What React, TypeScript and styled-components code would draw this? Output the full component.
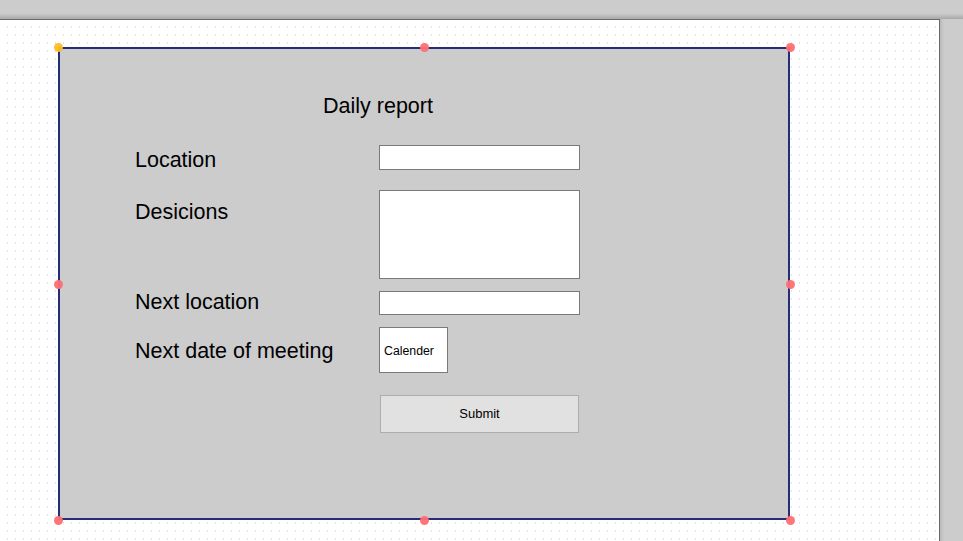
import React from "react";
import styled, { createGlobalStyle } from "styled-components";

const GlobalStyle = createGlobalStyle`
  html, body {
    margin: 0;
    padding: 0;
    background: #cccccc;
    font-family: "Liberation Sans", Arial, sans-serif;
  }
`;

const Page = styled.div`
  width: 963px;
  height: 541px;
  display: grid;
  grid-template-rows: 19px 1fr;
  background: #cccccc;
  overflow: hidden;
`;

const TopBar = styled.div`
  background: linear-gradient(#cccccc 0%, #cccccc 70%, #a9a9a9 100%);
`;

const Workspace = styled.div`
  display: flex;
`;

// dotted design grid: a 1x2 dot every 8px
const Canvas = styled.div`
  width: 940px;
  box-sizing: border-box;
  border-top: 1px solid #6a6a6a;
  border-right: 1px solid #6a6a6a;
  padding: 27px 0 0 58px;
  background-color: #ffffff;
  background-image: linear-gradient(90deg, transparent 1px, #ffffff 1px),
    linear-gradient(180deg, #e2e2e2 2px, #ffffff 2px);
  background-size: 8px 8px;
  background-position: 7px 6px;
`;

const SideGutter = styled.div`
  flex: 1;
  background: linear-gradient(90deg, #b8b8b8 0px, #cccccc 4px);
`;

const Panel = styled.div`
  position: relative;
  width: 732px;
  height: 473px;
  box-sizing: border-box;
  border: 2px solid #252c78;
  background: #cccccc;
  padding: 44px 0 0 75px;
  color: #000000;
`;

const Handle = styled.span<{ $x: number; $y: number; $primary?: boolean }>`
  position: absolute;
  left: ${(p) => p.$x - 2 - 4.5}px;
  top: ${(p) => p.$y - 2 - 4.5}px;
  width: 9px;
  height: 9px;
  border-radius: 50%;
  background: ${(p) => (p.$primary ? "#fbbf24" : "#ff6f73")};
  opacity: 0.95;
`;

const Title = styled.div`
  margin-left: 188px;
  padding-top: 1px;
  font-size: 21.5px;
  line-height: 25px;
  height: 25px;
`;

const Row = styled.div<{ $mt: number; $h: number }>`
  display: grid;
  grid-template-columns: 244px 201px;
  grid-template-rows: ${(p) => p.$h}px;
  align-items: start;
  margin-top: ${(p) => p.$mt}px;
`;

const Label = styled.label<{ $dy: number }>`
  margin-top: ${(p) => p.$dy}px;
  font-size: 21.5px;
  line-height: 25px;
  height: 25px;
  white-space: nowrap;
`;

const TextInput = styled.input`
  display: block;
  width: 201px;
  height: 100%;
  box-sizing: border-box;
  margin: 0;
  padding: 0 4px;
  border: 1px solid #7a7a7a;
  background: #ffffff;
  outline: none;
`;

const TextArea = styled.textarea`
  display: block;
  width: 201px;
  height: 100%;
  box-sizing: border-box;
  margin: 0;
  padding: 4px;
  border: 1px solid #7a7a7a;
  background: #ffffff;
  resize: none;
  outline: none;
`;

const CalendarBox = styled.div`
  width: 69px;
  height: 100%;
  box-sizing: border-box;
  border: 1px solid #7a7a7a;
  background: #ffffff;
  display: flex;
  align-items: center;
  padding: 2px 0 0 4px;
  font-size: 12.3px;
`;

const SubmitButton = styled.button`
  display: block;
  margin-left: 1px;
  width: 199px;
  height: 100%;
  box-sizing: border-box;
  border: 1px solid #adadad;
  background: #e1e1e1;
  font-family: "Liberation Sans", Arial, sans-serif;
  font-size: 13px;
  color: #000000;
  padding: 0 0 2px;
`;

const handles = [
  { x: 0, y: 0, primary: true },
  { x: 366, y: 0 },
  { x: 732, y: 0 },
  { x: 0, y: 237 },
  { x: 732, y: 237 },
  { x: 0, y: 473 },
  { x: 366, y: 473 },
  { x: 732, y: 473 },
];

export default function App() {
  return (
    <>
      <GlobalStyle />
      <Page>
        <TopBar />
        <Workspace>
          <Canvas>
            <Panel>
              <Title>Daily report</Title>

              <Row $mt={26} $h={25}>
                <Label $dy={3}>Location</Label>
                <TextInput />
              </Row>

              <Row $mt={20} $h={89}>
                <Label $dy={10}>Desicions</Label>
                <TextArea />
              </Row>

              <Row $mt={12} $h={24}>
                <Label $dy={-1}>Next location</Label>
                <TextInput />
              </Row>

              <Row $mt={12} $h={46}>
                <Label $dy={12}>Next date of meeting</Label>
                <CalendarBox>Calender</CalendarBox>
              </Row>

              <Row $mt={22} $h={38}>
                <span />
                <SubmitButton>Submit</SubmitButton>
              </Row>

              {handles.map((h, i) => (
                <Handle key={i} $x={h.x} $y={h.y} $primary={h.primary} />
              ))}
            </Panel>
          </Canvas>
          <SideGutter />
        </Workspace>
      </Page>
    </>
  );
}
